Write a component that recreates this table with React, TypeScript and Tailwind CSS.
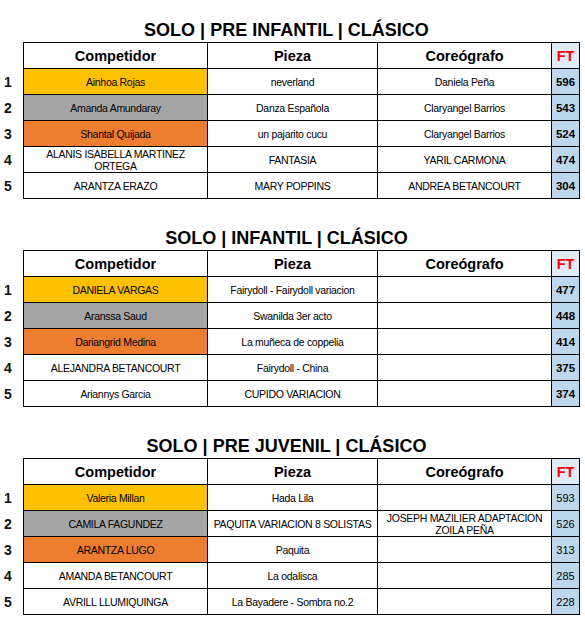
import React from "react";

type Row = { name: string; piece: string; choreo: string; ft: string };
type Table = { title: string; boldFt: boolean; rows: Row[] };

const tables: Table[] = [
  {
    title: "SOLO | PRE INFANTIL | CLÁSICO",
    boldFt: true,
    rows: [
      { name: "Ainhoa Rojas", piece: "neverland", choreo: "Daniela Peña", ft: "596" },
      { name: "Amanda Amundaray", piece: "Danza Española", choreo: "Claryangel Barrios", ft: "543" },
      { name: "Shantal Quijada", piece: "un pajarito cucu", choreo: "Claryangel Barrios", ft: "524" },
      { name: "ALANIS ISABELLA MARTINEZ ORTEGA", piece: "FANTASIA", choreo: "YARIL CARMONA", ft: "474" },
      { name: "ARANTZA ERAZO", piece: "MARY POPPINS", choreo: "ANDREA BETANCOURT", ft: "304" },
    ],
  },
  {
    title: "SOLO | INFANTIL | CLÁSICO",
    boldFt: true,
    rows: [
      { name: "DANIELA VARGAS", piece: "Fairydoll - Fairydoll variacion", choreo: "", ft: "477" },
      { name: "Aranssa Saud", piece: "Swanilda 3er acto", choreo: "", ft: "448" },
      { name: "Dariangrid Medina", piece: "La muñeca de coppelia", choreo: "", ft: "414" },
      { name: "ALEJANDRA BETANCOURT", piece: "Fairydoll - China", choreo: "", ft: "375" },
      { name: "Ariannys Garcia", piece: "CUPIDO VARIACION", choreo: "", ft: "374" },
    ],
  },
  {
    title: "SOLO | PRE JUVENIL | CLÁSICO",
    boldFt: false,
    rows: [
      { name: "Valeria Millan", piece: "Hada Lila", choreo: "", ft: "593" },
      { name: "CAMILA FAGUNDEZ", piece: "PAQUITA VARIACION 8 SOLISTAS", choreo: "JOSEPH MAZILIER ADAPTACION ZOILA PEÑA", ft: "526" },
      { name: "ARANTZA LUGO", piece: "Paquita", choreo: "", ft: "313" },
      { name: "AMANDA BETANCOURT", piece: "La odalisca", choreo: "", ft: "285" },
      { name: "AVRILL LLUMIQUINGA", piece: "La Bayadere - Sombra no.2", choreo: "", ft: "228" },
    ],
  },
];

const nameBg = ["bg-[#FFC000]", "bg-[#A5A5A5]", "bg-[#ED7D31]", "bg-white", "bg-white"];

const cell =
  "border-r border-b border-black flex items-center justify-center text-center px-[2px] text-[10.5px] leading-[12px] tracking-[-0.3px] text-black";

function ResultTable({ t }: { t: Table }) {
  return (
    <div className="flex flex-col">
      <div className="w-[573px] h-[23px] text-center text-[18px] leading-[22px] font-bold text-black">
        {t.title}
      </div>
      <div className="flex">
        <div className="w-[23px] flex flex-col pt-[27px]">
          {t.rows.map((_, i) => (
            <div
              key={i}
              className="h-[26px] flex items-center pl-[4px] text-[14px] font-bold text-[#111]"
            >
              {i + 1}
            </div>
          ))}
        </div>
        <div className="border-l border-t border-black grid grid-cols-[184px_170px_174px_28px] auto-rows-[26px]">
          <div className={cell + " text-[14.5px] font-bold tracking-normal"}>Competidor</div>
          <div className={cell + " text-[14.5px] font-bold tracking-normal"}>Pieza</div>
          <div className={cell + " text-[14.5px] font-bold tracking-normal"}>Coreógrafo</div>
          <div className={cell + " bg-[#DDEBF7] text-[14.5px] font-bold tracking-normal !text-[#FF0000]"}>FT</div>
          {t.rows.map((r, i) => (
            <React.Fragment key={i}>
              <div className={cell + " " + nameBg[i]}>{r.name}</div>
              <div className={cell}>{r.piece}</div>
              <div className={cell}>{r.choreo}</div>
              <div
                className={
                  cell +
                  " bg-[#BDD7EE] tracking-normal " +
                  (t.boldFt ? "font-bold text-[11.5px]" : "text-[11px]")
                }
              >
                {r.ft}
              </div>
            </React.Fragment>
          ))}
        </div>
      </div>
    </div>
  );
}

export default function App() {
  return (
    <div
      className="w-[585px] h-[619px] bg-white pt-[19px] flex flex-col gap-[28px]"
      style={{ fontFamily: '"Liberation Sans", Arial, sans-serif' }}
    >
      {tables.map((t, i) => (
        <ResultTable key={i} t={t} />
      ))}
    </div>
  );
}
